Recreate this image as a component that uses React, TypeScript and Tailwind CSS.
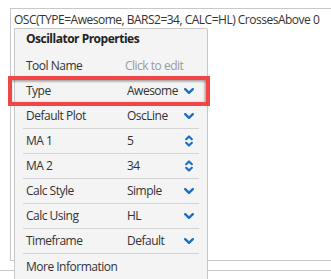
import { ReactNode } from 'react';

const ChevronDown = () => (
    <svg width="10" height="7" viewBox="0 0 10 7" className="block">
        <path d="M1.2 1.2 L5 4.8 L8.8 1.2" fill="none" stroke="#1a6fc4" strokeWidth="2.4" strokeLinecap="round" strokeLinejoin="round" />
    </svg>
);

const ChevronUpDown = () => (
    <svg width="8" height="12" viewBox="0 0 8 12" className="block">
        <path d="M1.2 4.2 L4 1.5 L6.8 4.2" fill="none" stroke="#1a6fc4" strokeWidth="2.2" strokeLinecap="round" strokeLinejoin="round" />
        <path d="M1.2 7.8 L4 10.5 L6.8 7.8" fill="none" stroke="#1a6fc4" strokeWidth="2.2" strokeLinecap="round" strokeLinejoin="round" />
    </svg>
);

type RowProps = {
    label: string;
    value?: ReactNode;
    icon?: 'down' | 'updown';
    muted?: boolean;
    last?: boolean;
};

function Row({ label, value, icon, muted, last }: RowProps) {
    return (
        <div className={`flex items-center h-[25px] pl-[3px] pr-[5px] whitespace-nowrap ${last ? '' : 'border-b border-[#d4d4d4]'}`}>
            <span className="w-[101px] shrink-0">{label}</span>
            <span className={`flex-1 ${muted ? 'text-[#9a9a9a] -ml-[2px]' : ''}`}>{value}</span>
            {icon === 'down' && (
                <span className="w-[10px] flex justify-center">
                    <ChevronDown />
                </span>
            )}
            {icon === 'updown' && (
                <span className="w-[10px] flex justify-center">
                    <ChevronUpDown />
                </span>
            )}
        </div>
    );
}

export default function App() {
    return (
        <div
            className="relative w-[331px] h-[279px] bg-white overflow-hidden text-[12px] tracking-[-0.5px] text-[#333]"
            style={{ fontFamily: '"Open Sans", "Liberation Sans", sans-serif' }}
        >
            {/* condição / área do editor */}
            <div className="ml-[10px] mt-[8px] h-[253px] border-l border-t border-b border-[#c8c8c8] pl-[3px] pt-[2px]">
                <div className="leading-[18px] whitespace-nowrap">
                    OSC(TYPE=Awesome, BARS2=34, CALC=HL) CrossesAbove 0
                </div>
            </div>
            <div className="mt-[9px] border-t border-[#c8c8c8]" />

            {/* popup de propriedades */}
            <div className="absolute left-[14px] top-[28px] w-[194px] h-[270px] bg-[#f4f4f4] border border-[#c8c8c8] rounded-tr-[2px]">
                <div className="h-[25px] pl-[11px] pt-[1px] font-bold leading-[18px] text-[#222]">
                    Oscillator Properties
                </div>
                <div className="mx-[8px]">
                    <Row label="Tool Name" value="Click to edit" muted />
                    <Row label="Type" value="Awesome" icon="down" />
                    <Row label="Default Plot" value="OscLine" icon="down" />
                    <Row label="MA 1" value="5" icon="updown" />
                    <Row label="MA 2" value="34" icon="updown" />
                    <Row label="Calc Style" value="Simple" icon="down" />
                    <Row label="Calc Using" value="HL" icon="down" />
                    <Row label="Timeframe" value="Default" icon="down" />
                    <Row label="More Information" last />
                </div>
            </div>

            {/* destaque vermelho */}
            <div className="absolute left-[8px] top-[76px] w-[202px] h-[30px] border-[4px] border-[#f24646] shadow-[inset_0_2px_2px_rgba(0,0,0,0.25),inset_-2px_0_2px_rgba(0,0,0,0.2)]" />
        </div>
    );
}
